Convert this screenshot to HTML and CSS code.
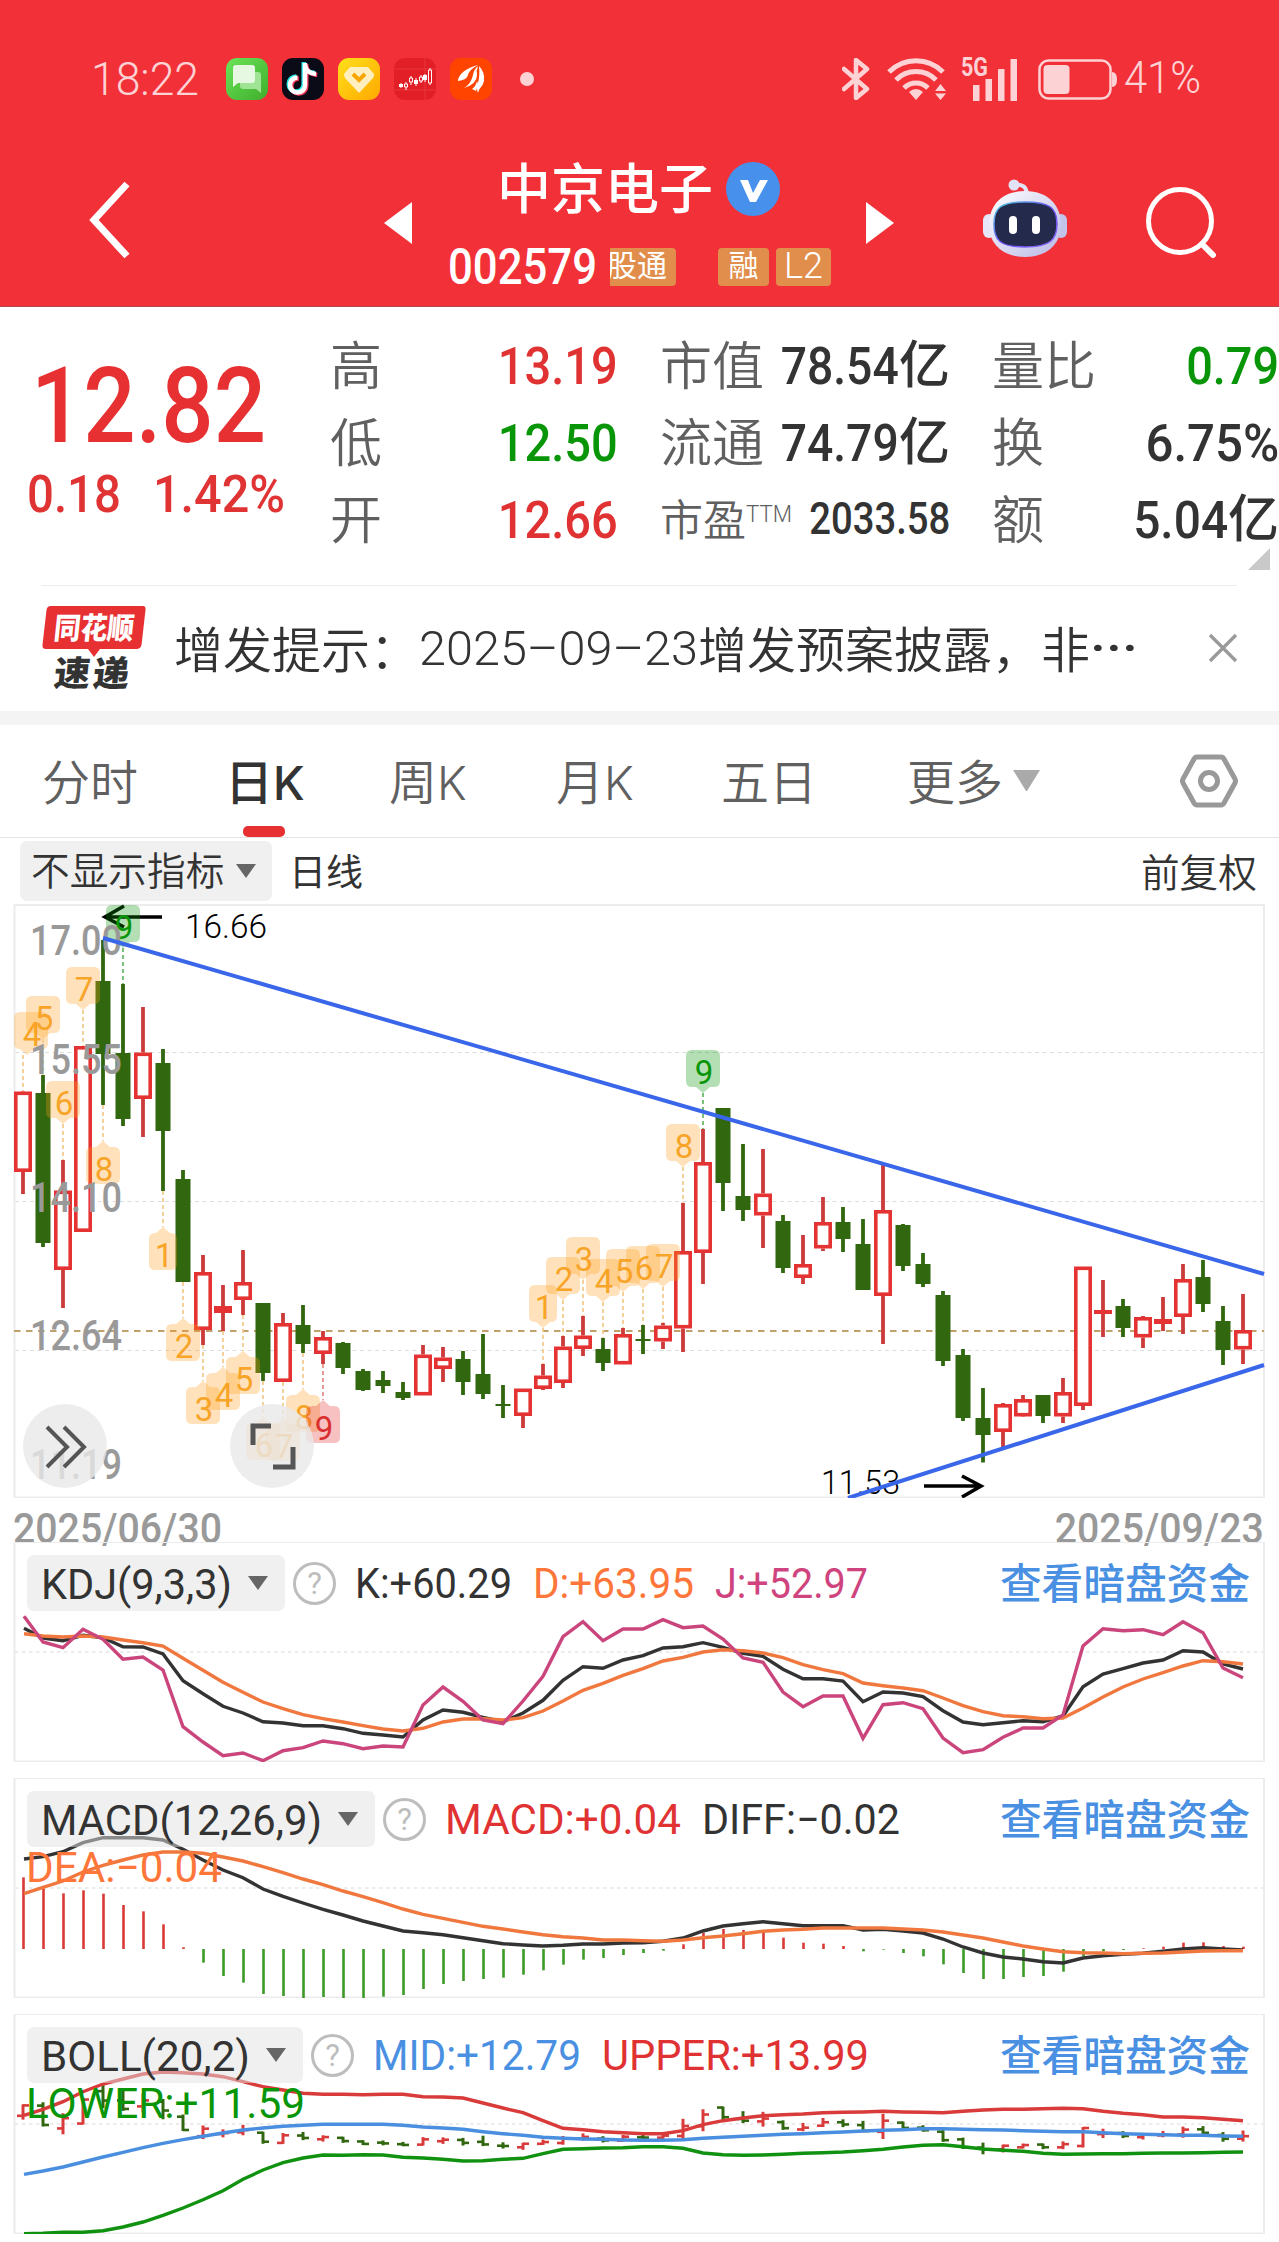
FILE: index.html
```html
<!DOCTYPE html>
<html lang="zh-CN">
<head>
<meta charset="utf-8">
<title>中京电子 002579</title>
<link rel="stylesheet" href="styles.css">
</head>
<body>
<header class="top">
  <div class="status">
    <span class="clock fit" data-w="108">18:22</span>
    <div class="apps">
      <svg class="app" viewBox="0 0 42 42"><defs><linearGradient id="gm" x1="0" y1="0" x2="1" y2="1"><stop offset="0" stop-color="#6be358"/><stop offset="1" stop-color="#3fae2c"/></linearGradient></defs><rect width="42" height="42" rx="11" fill="url(#gm)"/><path d="M14 14h18q3 0 3 3v18l-5-4H17q-3 0-3-3z" fill="#9fe394"/><path d="M7 10q0-3 3-3h16q3 0 3 3v12q0 3-3 3H12l-5 4z" fill="#e6f8e2"/></svg>
      <svg class="app" viewBox="0 0 42 42"><rect width="42" height="42" rx="11" fill="#0b0b17"/><g fill="none" stroke-width="4.500"><path d="M23 5v22a7.500 7.500 0 1 1-7.500-7.500M23 7q1 8 11 9" stroke="#25e8e4" transform="translate(-1.3 -1)"/><path d="M23 5v22a7.500 7.500 0 1 1-7.500-7.500M23 7q1 8 11 9" stroke="#f83a5c" transform="translate(1.3 1)"/><path d="M23 5v22a7.500 7.500 0 1 1-7.500-7.500M23 7q1 8 11 9" stroke="#fff"/></g></svg>
      <svg class="app" viewBox="0 0 42 42"><defs><linearGradient id="gy" x1="0" y1="0" x2="1" y2="1"><stop offset="0" stop-color="#ffe01a"/><stop offset="1" stop-color="#ffa800"/></linearGradient></defs><rect width="42" height="42" rx="11" fill="url(#gy)"/><path d="M12 9h18l6 7q0 3-1 4L22 34q-1 1-2 0L7 20q-1-2-1-4z" fill="#ffefbf"/><path d="M15 16l6 6 6-6" fill="none" stroke="#f9a500" stroke-width="4"/></svg>
      <svg class="app" viewBox="0 0 42 42"><rect width="42" height="42" rx="11" fill="#e21f26"/><path d="M0 11h42M0 32h42M31 0v42" stroke="#e9363a" stroke-width="1"/><path d="M7 25v5M12 24v8M17 18v9M22 20v8M27 17v8M31 16v8M36 10v17" stroke="#fff" stroke-width="1"/><path d="M5 26h4v3H5zM20 22h4v4h-4zM29 17h4v5h-4z" fill="#fff"/><path d="M10.500 26h3v3h-3zM15.500 20h3v4h-3zM25.500 19h3v4h-3zM34.500 12h3v13h-3z" fill="#e21f26" stroke="#fff" stroke-width="1"/></svg>
      <svg class="app" viewBox="0 0 42 42"><rect width="42" height="42" rx="11" fill="#ff4400"/><path d="M8 22Q10 12 28 7 19 12 18 17q-1 5-10 6zM14 30Q21 26 23 17q1-6 5-9-2 5-1 9 0 9-13 13zM28 35q-2-5 0-10 2-7 1-17 6 6 5 15-1 4-3 6-2 2-3 6zM22 31q4-3 5-8l1 3q-1 5-2 7z" fill="#fff"/></svg>
    </div>
    <i class="more-dot"></i>
    <div class="sys">
      <svg class="bt" viewBox="0 0 28 42"><path d="M2 11l23 20-11 9V2l11 9L2 31" fill="none" stroke="#fdd2d4" stroke-width="4.500" stroke-linejoin="round" stroke-linecap="round"/></svg>
      <svg class="wifi" viewBox="0 0 60 44"><g fill="none" stroke="#fdd2d4" stroke-width="5"><path d="M2 15a38 38 0 0 1 54 0"/><path d="M9 23a28 28 0 0 1 40 0"/><path d="M17 31a17 17 0 0 1 24 0"/></g><path d="M29 43l-7-8q7-6 14 0zM48 34l5.500-7 5.500 7zM48 36.500h11l-5.500 6.500z" fill="#fdd2d4"/></svg>
      <svg class="cell" viewBox="0 0 58 44"><text x="0" y="19" textLength="27" lengthAdjust="spacingAndGlyphs">5G</text><path d="M12 28h6.500v16H12zM24.500 22H31v22h-6.500zM37 12h6.500v32H37zM49.500 2H56v42h-6.500z" fill="#fdd2d4"/></svg>
      <svg class="batt" viewBox="0 0 80 42"><rect x="1.500" y="2.500" width="71" height="38" rx="9" fill="none" stroke="#fdd2d4" stroke-width="2.500"/><rect x="5.500" y="7" width="26" height="29" rx="4" fill="#fdd2d4"/><path d="M74 14q5 0 5 7.500T74 29z" fill="#fdd2d4"/></svg>
      <span class="pct fit" data-w="77">41%</span>
    </div>
  </div>
  <div class="nav">
    <svg class="back" viewBox="0 0 46 84"><path d="M41 6L8 42l33 36" fill="none" stroke="#fff" stroke-width="7"/></svg>
    <svg class="tri" viewBox="0 0 28 42"><path d="M28 0v42L0 21z" fill="#fff"/></svg>
    <div class="title">
      <div class="name"><span>中京电子</span>
        <svg class="vip" viewBox="0 0 54 54"><circle cx="27" cy="27" r="27" fill="#4791ed"/><path d="M14 18h8l5 13 7-13h8L30 40h-6z" fill="#fff"/></svg>
      </div>
      <div class="code"><b class="fit" data-w="149">002579</b>
        <span class="tag cut"><span>股通</span></span><span class="tag rong">融</span><span class="tag l2">L2</span>
      </div>
    </div>
    <svg class="tri" viewBox="0 0 28 42"><path d="M0 0v42l28-21z" fill="#fff"/></svg>
    <svg class="robot" viewBox="0 0 86 80"><defs><linearGradient id="rb" x1="0" y1="0" x2="1" y2="1"><stop offset="0" stop-color="#fff"/><stop offset="1" stop-color="#b9b8e6"/></linearGradient><linearGradient id="rs" x1="0" y1="0" x2="1" y2="1"><stop offset="0" stop-color="#4fd2e0"/><stop offset=".5" stop-color="#6a4ff0"/><stop offset="1" stop-color="#8e6bff"/></linearGradient></defs><path d="M32 6q12-2 13 9" fill="none" stroke="#e3e3f6" stroke-width="4"/><circle cx="32" cy="6" r="5.500" fill="#e3e3f6"/><rect x="1" y="35" width="12" height="24" rx="6" fill="#e6e6f8"/><rect x="73" y="35" width="12" height="24" rx="6" fill="#c3c3ea"/><path d="M43 12c24 0 36 15 36 34S65 78 43 78 7 65 7 46s12-34 36-34z" fill="url(#rb)"/><path d="M43 23c25 0 32 6 32 22s-7 23-32 23-31-7-31-23 6-22 31-22z" fill="#232a4c" stroke="url(#rs)" stroke-width="1.500"/><rect x="27" y="37" width="8" height="18" rx="4" fill="#fff"/><rect x="50" y="37" width="8" height="18" rx="4" fill="#fff"/></svg>
    <svg class="search" viewBox="0 0 76 76"><circle cx="34" cy="36" r="31.500" fill="none" stroke="#fff" stroke-width="5"/><path d="M56 59l11 11" stroke="#fff" stroke-width="6" stroke-linecap="round"/></svg>
  </div>
</header>

<section class="quote">
  <div class="price">
    <div class="last"><span class="fit" data-w="235">12.82</span></div>
    <div class="chg"><span class="fit" data-w="94">0.18</span><span class="fit" data-w="132">1.42%</span></div>
  </div>
  <dl class="col c1">
    <div><dt>高</dt><dd class="up"><span class="fit r" data-w="120">13.19</span></dd></div>
    <div><dt>低</dt><dd class="down"><span class="fit r" data-w="120">12.50</span></dd></div>
    <div><dt>开</dt><dd class="up"><span class="fit r" data-w="120">12.66</span></dd></div>
  </dl>
  <dl class="col c2">
    <div><dt>市值</dt><dd><span class="fit r" data-w="118">78.54</span><span class="yi">亿</span></dd></div>
    <div><dt>流通</dt><dd><span class="fit r" data-w="118">74.79</span><span class="yi">亿</span></dd></div>
    <div class="small"><dt>市盈<sup class="fit" data-w="46">TTM</sup></dt><dd><span class="fit r" data-w="141">2033.58</span></dd></div>
  </dl>
  <dl class="col c3">
    <div><dt>量比</dt><dd class="down"><span class="fit r" data-w="93">0.79</span></dd></div>
    <div><dt>换</dt><dd><span class="fit r" data-w="134">6.75%</span></dd></div>
    <div><dt>额</dt><dd><span class="fit r" data-w="95">5.04</span><span class="yi">亿</span></dd></div>
  </dl>
  <i class="corner"></i>
</section>

<section class="notice">
  <svg class="logo" viewBox="0 0 104 86"><path d="M9 2h92q3 0 2.500 4l-4 35q-1 4-5 4H58l-6 8-6-8H4q-4 0-3.500-4l4-35q.5-4 4.500-4z" fill="#e73032"/><text class="lg1" transform="translate(11 35) skewX(-6)" textLength="80" lengthAdjust="spacingAndGlyphs">同花顺</text><text class="lg2" transform="translate(11 81.500) skewX(-6)" textLength="36" lengthAdjust="spacingAndGlyphs">速</text><text class="lg2" transform="translate(50 81.500) skewX(-6)" textLength="36" lengthAdjust="spacingAndGlyphs">递</text></svg>
  <p><span>增发提示：</span><span class="num fit" data-w="279">2025–09–23</span><span>增发预案披露，非</span><span class="dots fit" data-w="48">···</span></p>
  <svg class="close" viewBox="0 0 30 30"><path d="M2 2l26 26M28 2L2 28" stroke="#999" stroke-width="3.200"/></svg>
</section>

<nav class="tabs">
  <span class="t1">分时</span><span class="t2 on">日<em>K</em></span><span class="t3">周<em>K</em></span><span class="t4">月<em>K</em></span><span class="t5">五日</span><span class="t6">更多</span>
  <i class="caret"></i>
  <svg class="hex" viewBox="0 0 58 54"><path d="M17 3h24q2 0 3 2l11 20q1 2 0 4L44 49q-1 2-3 2H17q-2 0-3-2L3 29q-1-2 0-4L14 5q1-2 3-2z" fill="none" stroke="#999" stroke-width="5"/><circle cx="29" cy="27" r="8.500" fill="none" stroke="#999" stroke-width="5"/></svg>
</nav>

<div class="tools">
  <span class="pick">不显示指标<i></i></span><span class="line">日线</span><span class="adj">前复权</span>
</div>

<section class="main-chart">
  <svg id="kline" viewBox="0 904 1279 594"></svg>
  <button class="round b1"><svg viewBox="0 0 84 84"><path d="M24 23l20 20-20 20M41 23l20 20-20 20" fill="none" stroke="#555" stroke-width="4"/></svg></button>
  <button class="round b2"><svg viewBox="0 0 84 84"><path d="M41 22H23v19M63 43v20H43" fill="none" stroke="#555" stroke-width="5"/></svg></button>
</section>
<div class="dates"><span class="fit" data-w="209">2025/06/30</span><span class="fit r" data-w="209">2025/09/23</span></div>

<section class="panel">
  <svg id="kdj" viewBox="0 1542 1279 220"></svg>
  <div class="head"><span class="pick"><span class="fit" data-w="191">KDJ(9,3,3)</span><i></i></span><span class="q">?</span>
    <div class="vals"><span class="v dark fit" data-w="157">K:+60.29</span><span class="v orange fit" data-w="161">D:+63.95</span><span class="v pink fit" data-w="153">J:+52.97</span></div><a>查看暗盘资金</a></div>
</section>
<section class="panel">
  <svg id="macd" viewBox="0 1778 1279 220"></svg>
  <div class="head"><span class="pick"><span class="fit" data-w="281">MACD(12,26,9)</span><i></i></span><span class="q">?</span>
    <div class="vals"><span class="v up fit" data-w="236">MACD:+0.04</span><span class="v dark fit" data-w="198">DIFF:−0.02</span></div><a>查看暗盘资金</a></div>
  <div class="second"><span class="v orange fit" data-w="196">DEA:−0.04</span></div>
</section>
<section class="panel">
  <svg id="boll" viewBox="0 2014 1279 220"></svg>
  <div class="head"><span class="pick"><span class="fit" data-w="209">BOLL(20,2)</span><i></i></span><span class="q">?</span>
    <div class="vals"><span class="v blue fit" data-w="208">MID:+12.79</span><span class="v up fit" data-w="267">UPPER:+13.99</span></div><a>查看暗盘资金</a></div>
  <div class="second"><span class="v down fit" data-w="279">LOWER:+11.59</span></div>
</section>
<script src="chart.js"></script>
</body>
</html>
```
FILE: styles.css
```css
* { box-sizing: border-box; margin: 0; padding: 0; }
body {
  width: 1279px; height: 2242px; overflow: hidden; background: #fff; color: #333;
  font-family: Roboto, "Noto Sans CJK SC", sans-serif;
}
svg { display: block; flex: none; }
i { display: block; }
.fit { display: inline-block; white-space: nowrap; transform-origin: 0 50%; }
.fit.r { transform-origin: 100% 50%; }
.up { color: #e03232; }
.down { color: #089608; }
.dark { color: #333; }
.orange { color: #ff763a; }
.pink { color: #cf447e; }
.blue { color: #4a90e2; }

.top { height: 307px; background: #f23038; border-bottom: 1px solid #b5484c; color: #fff; padding-top: 48px; }
.status { height: 62px; display: flex; align-items: center; padding: 0 78px 0 91px; color: #fdd2d4; }
.clock { font-size: 47px; font-weight: 300; line-height: 56px; margin-top: -1px; }
.apps { display: flex; gap: 14px; margin-left: 27px; }
.app { width: 42px; height: 42px; }
.more-dot { width: 14px; height: 14px; border-radius: 50%; background: #fdd2d4; margin-left: 28px; }
.sys { display: flex; align-items: center; margin-left: auto; }
.bt { width: 28px; height: 42px; margin-right: 17px; }
.wifi { width: 60px; height: 44px; margin-right: 14px; }
.cell { width: 58px; height: 44px; margin-right: 19px; overflow: visible; }
.cell text { font: 700 26px Roboto, sans-serif; fill: #fdd2d4; }
.batt { width: 80px; height: 42px; margin-right: 6px; }
.pct { font-size: 44px; font-weight: 300; line-height: 56px; margin-top: -2px; }

.nav { height: 196px; display: flex; align-items: flex-start; padding-left: 86px; }
.back { width: 46px; height: 84px; margin-top: 68px; }
.nav .tri { width: 28px; height: 42px; margin-top: 92px; }
.back + .tri { margin-left: 252px; }
.title { width: 418px; margin-left: 36px; padding-top: 38px; }
.name { display: flex; align-items: center; height: 81px; padding-left: 49px; font-size: 54px; font-weight: 500; }
.name span { width: 216px; margin-right: 13px; padding-top: 5px; line-height: 82px; }
.vip { width: 54px; height: 54px; }
.code { display: flex; align-items: center; height: 76px; }
.code b { font-size: 50px; font-weight: 500; }
.tag { height: 38px; border-radius: 4px; background: #e18d4b; font-size: 30px; line-height: 35px; display: flex; justify-content: center; overflow: hidden; white-space: nowrap; }
.cut { width: 66px; justify-content: flex-end; padding-right: 9px; margin-left: 13px; border-radius: 0 4px 4px 0; }
.rong { width: 51px; margin-left: 42px; }
.l2 { width: 55px; margin-left: 7px; font-size: 36px; font-weight: 300; line-height: 37px; }
.robot { width: 86px; height: 80px; margin: 69px 0 0 88px; }
.search { width: 76px; height: 76px; margin: 75px 0 0 78px; }

.quote { height: 278px; display: flex; position: relative; padding-top: 20px; }
.price { width: 328px; }
.last { height: 157px; line-height: 159px; font-size: 106px; font-weight: 500; padding-left: 31px; color: #e73032; }
.chg { display: flex; gap: 32px; padding-left: 27px; height: 24px; line-height: 22px; font-size: 52px; font-weight: 500; color: #e03434; }
.col > div { display: flex; justify-content: space-between; align-items: center; height: 77px; line-height: 77px; white-space: nowrap; }
dt { font-size: 52px; font-weight: 350; color: #606060; height: 77px; line-height: 81px; }
dd { font-size: 52px; font-weight: 500; display: flex; height: 77px; line-height: 79px; }
.yi { font-size: 51px; line-height: 77px; }
.c1 { width: 288px; margin-left: 2px; }
.c2 { width: 290px; margin-left: 42px; }
.c3 { width: 287px; margin-left: 42px; }
.small dt { font-size: 43px; display: flex; }
.small dt .fit { font-size: 23px; font-weight: 300; line-height: 67px; }
.small dd { font-size: 44px; line-height: 77px; }
.corner { position: absolute; right: 9px; bottom: 15px; border: 11px solid; border-color: transparent #c9c9c9 #c9c9c9 transparent; }

.notice { height: 140px; border-bottom: 14px solid #f4f4f4; display: flex; align-items: flex-start; position: relative; padding-left: 42px; }
.notice::before { content: ""; position: absolute; left: 41px; right: 42px; top: 0; height: 1px; background: #ececec; }
.logo { width: 104px; height: 86px; margin-top: 19px; }
.lg1 { font: 900 30px "Noto Sans CJK SC", sans-serif; fill: #fff; }
.lg2 { font: 900 35px "Noto Sans CJK SC", sans-serif; fill: #333; }
.notice p { display: flex; width: 980px; margin-left: 28px; height: 126px; line-height: 122px; font-size: 49px; font-weight: 350; white-space: nowrap; padding-top: 6px; }
.notice .num { font-size: 49px; margin-top: -3px; }
.notice .dots { font-weight: 500; margin-top: -3px; }
.close { width: 30px; height: 30px; margin: 48px 0 0 54px; }

.tabs { height: 113px; border-bottom: 1px solid #e4e4e4; display: flex; font-size: 48px; font-weight: 350; color: #606060; line-height: 117px; padding-left: 42px; white-space: nowrap; }
.tabs em { font-style: normal; font-family: Inter, sans-serif; font-size: 46px; font-weight: 300; }
.tabs .on { color: #333; font-weight: 500; position: relative; margin-left: -1px; }
.tabs .on em { font-weight: 500; }
.on::after { content: ""; position: absolute; left: 18px; bottom: 0; width: 42px; height: 11px; border-radius: 5px; background: #e73032; }
.t1 { width: 184px; }
.t2 { width: 164px; }
.t3 { width: 167px; }
.t4 { width: 165px; }
.t5 { width: 186px; }
.t6 { width: 106px; }
.caret { width: 27px; height: 0; border: 13px solid transparent; border-top: 21px solid #aaa; border-bottom: 0; margin-top: 45px; }
.hex { width: 58px; height: 54px; margin: 29px 0 0 140px; }

.tools { height: 66px; display: flex; align-items: center; padding: 0 22px 0 20px; font-size: 38.700px; }
.pick { display: flex; align-items: center; background: rgba(226, 226, 226, .5); border-radius: 7px; }
.pick i { border: 10.500px solid transparent; border-top: 14px solid #666; border-bottom: 0; }
.tools .pick { width: 252px; height: 60px; padding: 2px 0 0 11px; line-height: 60px; font-weight: 350; }
.tools .pick i { margin: -2px 0 0 12px; }
.line { font-size: 37px; font-weight: 400; margin: -2px 0 0 17px; }
.adj { margin: -3px 0 0 auto; font-weight: 350; color: #333; }

.main-chart { height: 594px; position: relative; }
.main-chart svg { width: 100%; height: 100%; }
.round { position: absolute; top: 500px; width: 84px; height: 84px; border-radius: 50%; border: 0; background: rgba(232, 232, 232, .8); }
.b1 { left: 23px; }
.b2 { left: 230px; }
.axis { font: 500 42px Roboto, sans-serif; fill: #999; }
.mark { font: 400 33px Roboto, sans-serif; text-anchor: middle; }
.extreme { font: 300 34px Roboto, sans-serif; fill: #000; }

.dates { height: 44px; display: flex; justify-content: space-between; padding: 3px 15px 0 13px; line-height: 56px; font-size: 42px; font-weight: 500; color: #999; }

.panel { height: 220px; margin-bottom: 16px; position: relative; }
.panel > svg { width: 1279px; height: 220px; }
.head { position: absolute; left: 27px; top: 13px; width: 1223px; height: 56px; display: flex; align-items: center; font-size: 43px; font-weight: 450; }
.head .pick { height: 56px; padding: 2px 17px 0 14px; }
.head .pick i { margin: -3px 0 0 16px; }
.q { width: 43px; height: 43px; margin: 0 19px 0 8px; border: 3px solid #bdbdbd; border-radius: 50%; color: #bdbdbd; font-size: 31px; line-height: 38px; text-align: center; }
.vals { display: flex; gap: 21px; padding-top: 1px; }
.v { font-size: 42px; font-weight: 450; }
.head a { margin-left: auto; font-size: 41.700px; font-weight: 500; line-height: 56px; padding-top: 3px; color: #4a90e2; }
.second { position: absolute; left: 26px; top: 65px; line-height: 50px; }
```
FILE: chart.js
```javascript
document.fonts.ready.then(function () {
  document.querySelectorAll('.fit').forEach(function (el) {
    var w = +el.dataset.w, n = el.getBoundingClientRect().width;
    el.style.transform = 'scaleX(' + (w / n) + ')';
    el.style[el.classList.contains('r') ? 'marginLeft' : 'marginRight'] = (w - n) + 'px';
  });
});

var RED = '#e53232', GREEN = '#30670f';
function X(i) { return 23 + 20 * i; }
function line(x1, y1, x2, y2, c, w, d) {
  return '<line x1="' + x1 + '" y1="' + y1 + '" x2="' + x2 + '" y2="' + y2 + '" stroke="' + c + '" stroke-width="' + w + '"' + (d ? ' stroke-dasharray="' + d + '"' : '') + '/>';
}
function text(x, y, cls, s, w, extra) {
  return '<text x="' + x + '" y="' + y + '" class="' + cls + '"' + (w ? ' textLength="' + w + '" lengthAdjust="spacingAndGlyphs"' : '') + (extra || '') + '>' + s + '</text>';
}
function frame(top, h) {
  return '<rect x="14.5" y="' + (top + 1) + '" width="1249.5" height="' + (h - 1.5) + '" fill="none" stroke="#ececec" stroke-width="2"/>';
}
function curve(ys, base, c) {
  return '<polyline fill="none" stroke="' + c + '" stroke-width="3.4" points="' + ys.map(function (v, i) { return (X(i) + (i ? 0 : 1)) + ',' + (base + v / 3).toFixed(1); }).join(' ') + '"/>';
}

// [up?, high, body top, body bottom, low]
var K = [
[1,1091,1091.5,1172,1194],[0,1075,1093,1243,1247],[1,1160,1190.5,1270,1308],[1,1046,1046,1232,1232],[0,940,981,1054,1105],
[0,984,1053,1119,1126],[1,1007,1052.5,1099,1137],[0,1049,1063,1131,1191],[0,1170,1179,1282,1282],[1,1255,1272,1330,1345],
[1,1285,1306,1313,1331],[1,1250,1282,1300,1315],[0,1303,1303,1373,1381],[1,1313,1323,1382,1382],[0,1305,1325,1344,1353],
[1,1331,1337,1354,1364],[0,1342,1343,1368,1374],[0,1369,1371,1390,1391],[0,1371,1380,1386,1393],[0,1382,1392,1398,1400],
[1,1345,1354.5,1395.5,1395],[1,1347,1357.5,1369,1382],[0,1351,1359,1382,1395],[0,1334,1374,1394,1399],[0,1385,1404,1406,1418],
[1,1389,1388.5,1416,1428],[1,1364,1375.5,1389,1390],[1,1336,1346.5,1383,1388],[1,1316,1335.5,1349,1356],[0,1338,1349,1363,1371],
[1,1328,1334,1364.5,1364],[0,1325,1339,1341,1354],[1,1323,1325.5,1341.5,1349],[1,1203,1251,1328.5,1352],[1,1129,1162,1253,1284],
[0,1108,1108,1183,1211],[0,1144,1196,1210,1221],[1,1149,1193.5,1215.5,1248],[0,1215,1221,1268,1273],[1,1235,1264,1278,1284],
[1,1197,1222,1248.5,1251],[0,1207,1222,1239,1252],[0,1219,1244,1290,1290],[1,1165,1210,1296,1344],[0,1224,1225,1266,1271],
[0,1253,1264,1284,1287],[0,1291,1295,1361,1366],[0,1349,1355,1418,1421],[0,1388,1418,1435,1462.5],[1,1403,1404,1432,1448],
[1,1395,1399,1416.5,1417],[0,1395,1395,1416,1423],[1,1378,1392,1416.5,1423],[1,1267,1266.5,1406,1410],[1,1280,1310,1314,1337],
[0,1299,1306,1328,1337],[1,1316,1317,1337.5,1348],[1,1297,1319,1324,1331],[1,1264,1279,1317,1334],[0,1260,1277,1304,1312],
[0,1306,1321,1350,1365],[1,1294,1330,1349.5,1364]];

// [candle, digit, side (1 above, -1 below), colour]
var M = [[0,4,1],[1,5,1],[2,6,1],[3,7,1],[5,9,1,'g'],[4,8,-1],[7,1,-1],[8,2,-1],[9,3,-1],[10,4,-1],[11,5,-1],[12,6,-1],[13,7,-1],[14,8,-1],[15,9,-1,'r'],
[26,1,1],[27,2,1],[28,3,1],[29,4,1],[30,5,1],[31,6,1],[32,7,1],[33,8,1],[34,9,1,'g']];
var TONE = {
  o: ['#ff9f1e', '#f7a428', '#f3cd90'],
  g: ['#089608', '#089608', '#6dbb6d'],
  r: ['#e53232', '#d92f2f', '#e88f8f']
};

function kline() {
  var s = '';
  [1052.5, 1201.5, 1350.5].forEach(function (y) { s += line(15, y, 1263, y, '#dcdcdc', 1.2, '4 3.5'); });
  s += frame(904, 594);
  s += line(14, 1331, 1264, 1331, '#c2a06c', 1.8, '6.500 5.500');
  K.forEach(function (k, i) {
    var x = X(i), c = k[0] ? RED : GREEN, wc = k[0] ? '#cc3a3a' : GREEN;
    if (k[2] > k[1]) s += line(x, k[1], x, k[2], wc, 3.8);
    if (k[4] > k[3]) s += line(x, k[3], x, k[4], wc, 3.8);
    if (!k[0]) s += '<rect x="' + (x - 7.5) + '" y="' + k[2] + '" width="15" height="' + (k[3] - k[2]) + '" fill="' + c + '"/>';
    else if (k[3] - k[2] < 8) s += '<rect x="' + (x - 9) + '" y="' + k[2] + '" width="18" height="' + (k[3] - k[2]) + '" fill="' + c + '"/>';
    else s += '<rect x="' + (x - 7.2) + '" y="' + (k[2] + 1.8) + '" width="14.4" height="' + (k[3] - k[2] - 3.6) + '" fill="#fff" stroke="' + c + '" stroke-width="3.6"/>';
  });
  s += '<path d="M162 917H105M124 906L105 917l19 10M924 1486h57M962 1476l19 10-19 11" fill="none" stroke="#000" stroke-width="3.6"/>';
  M.forEach(function (m) {
    var k = K[m[0]], x = X(m[0]), cx = m[0] ? x : 31, t = TONE[m[3] || 'o'], w = m[1] === 1 ? 28 : 34;
    var up = m[2] > 0, tip = up ? k[1] - 36 : k[4] + 36, top = up ? k[1] - 79 : k[4] + 42;
    s += up ? line(x, tip, x, k[1], t[2], 1.8, '4 3') : line(x, k[4], x, tip, t[2], 1.8, '4 3');
    var l = cx - w / 2, r = cx + w / 2, b = top + 37, p = Math.max(x, l + 13);
    s += '<path fill-opacity=".3" fill="' + t[0] + '" d="M' + (l + 6) + ' ' + top + (up ? '' : 'H' + (p - 7) + 'L' + p + ' ' + (top - 6) + 'l7 6') +
      'H' + (r - 6) + 'q6 0 6 6V' + (b - 6) + 'q0 6-6 6' + (up ? 'H' + (p + 7) + 'l-7 6-7-6' : '') + 'H' + (l + 6) + 'q-6 0-6-6V' + (top + 6) + 'q0-6 6-6z"/>';
    s += text(cx + 1, top + 34, 'mark', m[1], 0, ' fill="' + t[1] + '"');
  });
  [['17.00', 955], ['15.55', 1073.5], ['14.10', 1212], ['12.64', 1350], ['11.19', 1479]].forEach(function (a) { s += text(30, a[1], 'axis', a[0], 92); });
  s += text(185, 938, 'extreme', '16.66', 82) + text(821, 1494, 'extreme', '11.53', 79);
  s += '<path d="M103 938L1264 1274M848 1498L1264 1365" fill="none" stroke="#3a67ea" stroke-width="4"/>';
  return s;
}

var kd = {
  k: [265,294,302,286,293,320,321,342,422,461,499,519,545,549,557,557,566,580,585,591,540,510,517,532,545,519,481,421,380,385,360,347,324,320,308,322,340,349,388,416,416,423,485,456,459,470,512,546,554,548,542,545,528,440,402,386,369,360,332,336,372,387],
  d: [281,288,291,288,291,300,308,318,355,391,427,457,486,506,524,536,546,557,567,573,565,546,537,536,540,533,513,483,451,430,406,386,363,352,336,329,332,339,353,374,389,401,429,437,444,452,474,497,515,527,530,536,534,504,471,441,417,398,378,362,365,372],
  j: [229,306,323,268,298,358,351,390,560,606,647,639,662,632,623,603,611,626,618,621,495,441,484,540,551,483,409,290,245,302,267,267,239,263,258,297,354,367,456,500,468,468,595,494,488,506,594,638,629,592,564,564,525,318,266,272,269,284,245,278,384,413]
};
var mc = {
  diff: [-63,-70,-85,-112,-127,-127,-127,-120,-92,-60,-30,-7,27,49,69,88,105,123,138,153,158,164,173,182,191,195,198,196,192,192,189,188,184,174,153,138,131,125,131,137,137,137,150,148,153,159,177,201,219,231,237,245,249,234,227,223,220,214,207,203,207,210],
  dea: [41,22,3,-24,-44,-60,-75,-84,-84,-80,-69,-57,-40,-22,-3,14,33,50,68,87,103,115,127,139,147,156,164,170,174,180,180,182,184,180,173,168,161,154,150,148,144,144,144,144,147,150,156,165,174,186,198,207,215,218,219,221,220,219,216,213,212,212],
  bar: [-8,26,40,31,41,75,94,133,202,248,288,308,342,348,354,351,354,354,350,345,327,312,303,297,293,284,271,254,239,234,225,219,212,193,159,147,150,157,173,188,191,198,214,209,219,229,253,279,297,297,291,288,275,228,214,210,205,200,188,187,198,200]
};
var bl = {
  up: [706,688,665,635,612,597,582,576,578,582,590,605,620,630,640,643,643,644,643,643,650,651,654,669,684,698,722,745,749,755,758,761,761,752,734,722,714,707,704,702,698,697,696,694,696,697,698,694,690,688,688,686,685,686,694,700,704,711,711,713,718,722],
  mid: [883,873,861,846,831,817,803,790,779,769,759,750,744,739,736,733,733,733,733,736,741,744,748,755,761,766,772,775,777,778,780,781,781,779,775,772,769,766,763,761,758,756,753,751,749,746,746,748,749,750,752,754,755,755,758,761,763,764,766,766,768,769],
  low: [1061,1060,1057,1057,1052,1041,1026,1006,984,959,932,898,870,848,834,825,826,824,825,832,834,838,843,842,838,835,821,808,806,804,803,800,800,805,819,824,826,825,823,820,818,816,812,808,801,796,794,800,807,811,814,820,823,822,821,821,820,819,819,818,817,816]
};
function mid(y) { return line(15, y, 1263, y, '#e6e6e6', 1.6, '3.500 3.500'); }

document.getElementById('kline').innerHTML = kline();
document.getElementById('kdj').innerHTML = frame(1541, 221) + mid(1652) + curve(kd.k, 1540, '#333') + curve(kd.d, 1540, '#f0783f') + curve(kd.j, 1540, '#cb457d');
document.getElementById('macd').innerHTML = frame(1777, 221) + mid(1888) + mc.bar.map(function (v, i) {
  return line(X(i) + .5, 1949, X(i) + .5, 1880 + v / 3, v < 207 ? '#d93a36' : '#3c9a26', 2.6);
}).join('') + curve(mc.diff, 1880, '#333') + curve(mc.dea, 1880, '#f0783f');
document.getElementById('boll').innerHTML = frame(2013, 221) + mid(2124) + K.map(function (k, i) {
  var f = function (y) { return 2116.7 + .129 * (y - 1179); }, x = X(i), c = k[0] ? '#d93a3a' : GREEN;
  var o = f(k[0] ? k[3] : k[2]), e = f(k[0] ? k[2] : k[3]);
  return line(x, f(k[1]) - 1, x, f(k[4]) + 1, c, 3) + line(x - 6, o, x, o, c, 2.6) + line(x, e, x + 6, e, c, 2.6);
}).join('') + curve(bl.up, 1880, '#d93a3a') + curve(bl.mid, 1880, '#4a8fdf') + curve(bl.low, 1880, '#109210');
```
